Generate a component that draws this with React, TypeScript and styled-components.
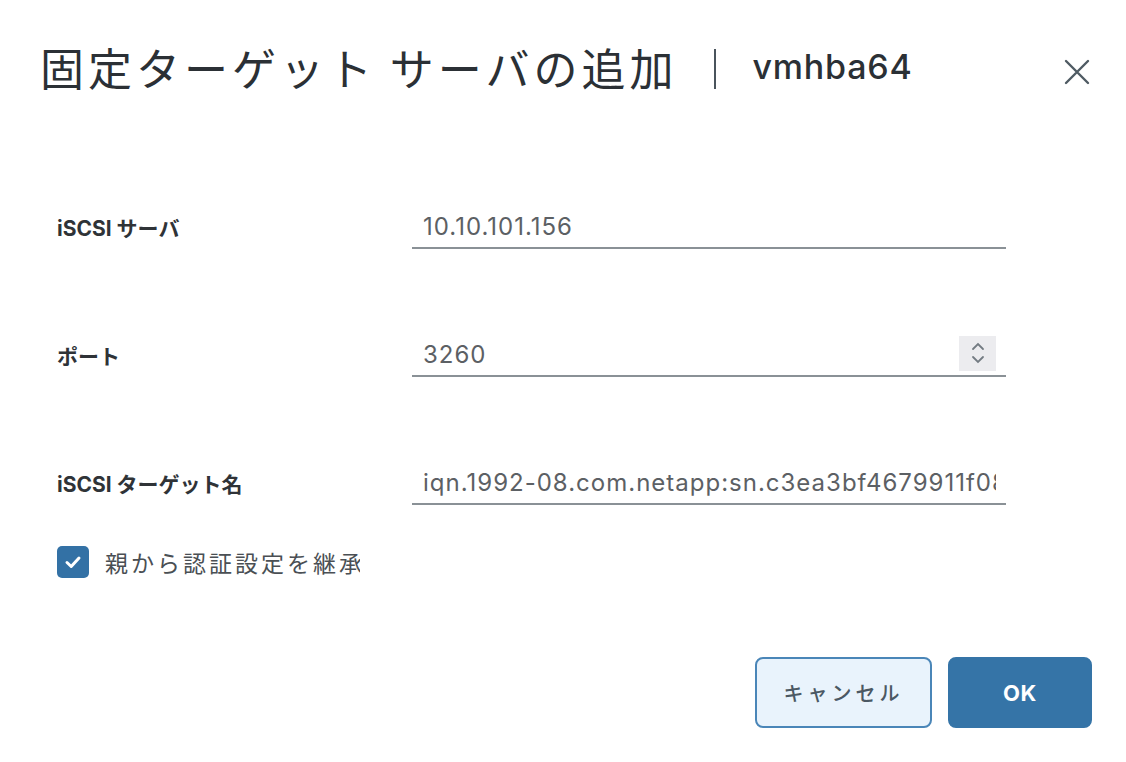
import styled, { createGlobalStyle } from 'styled-components';

const GlobalStyle = createGlobalStyle`
  body {
    margin: 0;
    background: #ffffff;
    font-family: Inter, "Noto Sans CJK JP", sans-serif;
  }
`;

const fields = [
  { label: 'iSCSI サーバ', value: '10.10.101.156', spinner: false },
  { label: 'ポート', value: '3260', spinner: true },
  {
    label: 'iSCSI ターゲット名',
    value: 'iqn.1992-08.com.netapp:sn.c3ea3bf4679911f08f8d00a098d390f7:vs.4',
    spinner: false,
  },
];

const CloseIcon = () => (
  <svg width="26" height="26" viewBox="0 0 26 26">
    <path d="M2 2 L24 24 M24 2 L2 24" stroke="#4f5b63" strokeWidth="2.4" strokeLinecap="round" />
  </svg>
);

const SpinnerIcon = () => (
  <svg width="16" height="26" viewBox="0 0 16 26">
    <path d="M3 9 L8 4 L13 9" fill="none" stroke="#737b82" strokeWidth="1.8" strokeLinecap="round" />
    <path d="M3 17 L8 22 L13 17" fill="none" stroke="#737b82" strokeWidth="1.8" strokeLinecap="round" />
  </svg>
);

const CheckIcon = () => (
  <svg width="20" height="20" viewBox="0 0 20 20">
    <path d="M4 10.5 L8.2 14.5 L16 6" fill="none" stroke="#ffffff" strokeWidth="3" strokeLinecap="round" strokeLinejoin="round" />
  </svg>
);

const App = () => {
  return (
    <>
      <GlobalStyle />
      <Dialog>
        <Header>
          <Title>固定ターゲット サーバの追加</Title>
          <Separator />
          <SubTitle>vmhba64</SubTitle>
          <CloseButton>
            <CloseIcon />
          </CloseButton>
        </Header>

        <Form>
          {fields.map((field) => (
            <Row key={field.label}>
              <Label>{field.label}</Label>
              <Field>
                <Value>{field.value}</Value>
                {field.spinner && (
                  <Spinner>
                    <SpinnerIcon />
                  </Spinner>
                )}
              </Field>
            </Row>
          ))}

          <CheckRow>
            <CheckBox>
              <CheckIcon />
            </CheckBox>
            <CheckLabel>親から認証設定を継承</CheckLabel>
          </CheckRow>
        </Form>

        <Footer>
          <Button>キャンセル</Button>
          <Button primary>OK</Button>
        </Footer>
      </Dialog>
    </>
  );
};

export default App;

const Dialog = styled.div`
  display: flex;
  flex-direction: column;
  width: 1126px;
  height: 762px;
  box-sizing: border-box;
  padding: 35px 34px 0 40px;
`;

const Header = styled.div`
  display: flex;
  align-items: center;
  height: 63px;
`;

const Title = styled.div`
  color: #2b3035;
  font-family: "Noto Sans CJK JP", sans-serif;
  font-size: 44px;
  font-weight: 400;
  letter-spacing: 4px;
  word-spacing: 0;
  white-space: nowrap;
`;

const Separator = styled.div`
  width: 2px;
  height: 40px;
  margin: 4px 36px 0 37px;
  background: #4a545c;
`;

const SubTitle = styled.div`
  color: #2b3035;
  font-size: 34px;
  font-weight: 500;
  letter-spacing: 0.8px;
`;

const CloseButton = styled.div`
  display: flex;
  margin-left: auto;
  margin-right: 2px;
  margin-top: 10px;
`;

const Form = styled.div`
  display: flex;
  flex-direction: column;
  gap: 86px;
  margin-top: 109px;
  padding-left: 17px;
`;

const Row = styled.div`
  display: grid;
  grid-template-columns: 355px 594px;
  align-items: center;
`;

const Label = styled.div`
  color: #2f3337;
  font-size: 21px;
  font-weight: 700;
  padding-bottom: 2px;
`;

const Field = styled.div`
  display: flex;
  align-items: center;
  height: 40px;
  padding: 0 10px 0 11px;
  border-bottom: 2px solid #8a9196;
  overflow: hidden;
`;

const Value = styled.div`
  flex: 1;
  overflow: hidden;
  white-space: nowrap;
  color: #5c6064;
  font-size: 24px;
  font-weight: 400;
  letter-spacing: 1px;
  padding-bottom: 2px;
`;

const Spinner = styled.div`
  display: flex;
  align-items: center;
  justify-content: center;
  width: 37px;
  height: 35px;
  margin-bottom: 4px;
  background: #ececef;
`;

const CheckRow = styled.div`
  display: flex;
  align-items: center;
  gap: 16px;
  margin-top: -46px;
`;

const CheckBox = styled.div`
  display: flex;
  align-items: center;
  justify-content: center;
  width: 32px;
  height: 32px;
  border-radius: 5px;
  background: #3371a5;
`;

const CheckLabel = styled.div`
  width: 255px;
  overflow: hidden;
  white-space: nowrap;
  color: #4a4f54;
  font-family: "Noto Sans CJK JP", sans-serif;
  font-size: 23px;
  letter-spacing: 3px;
`;

const Footer = styled.div`
  display: flex;
  justify-content: flex-end;
  gap: 16px;
  margin-top: 78px;
`;

const Button = styled.button<{ primary?: boolean }>`
  display: flex;
  align-items: center;
  justify-content: center;
  width: ${(p) => (p.primary ? '144px' : '177px')};
  height: 71px;
  border-radius: 8px;
  border: 2px solid ${(p) => (p.primary ? '#3574a7' : '#4a86b8')};
  background: ${(p) => (p.primary ? '#3574a7' : '#e9f3fc')};
  color: ${(p) => (p.primary ? '#ffffff' : '#4b5863')};
  font-family: Inter, "Noto Sans CJK JP", sans-serif;
  font-size: ${(p) => (p.primary ? '22px' : '20px')};
  font-weight: ${(p) => (p.primary ? 700 : 500)};
  letter-spacing: ${(p) => (p.primary ? '0.5px' : '4px')};
`;
